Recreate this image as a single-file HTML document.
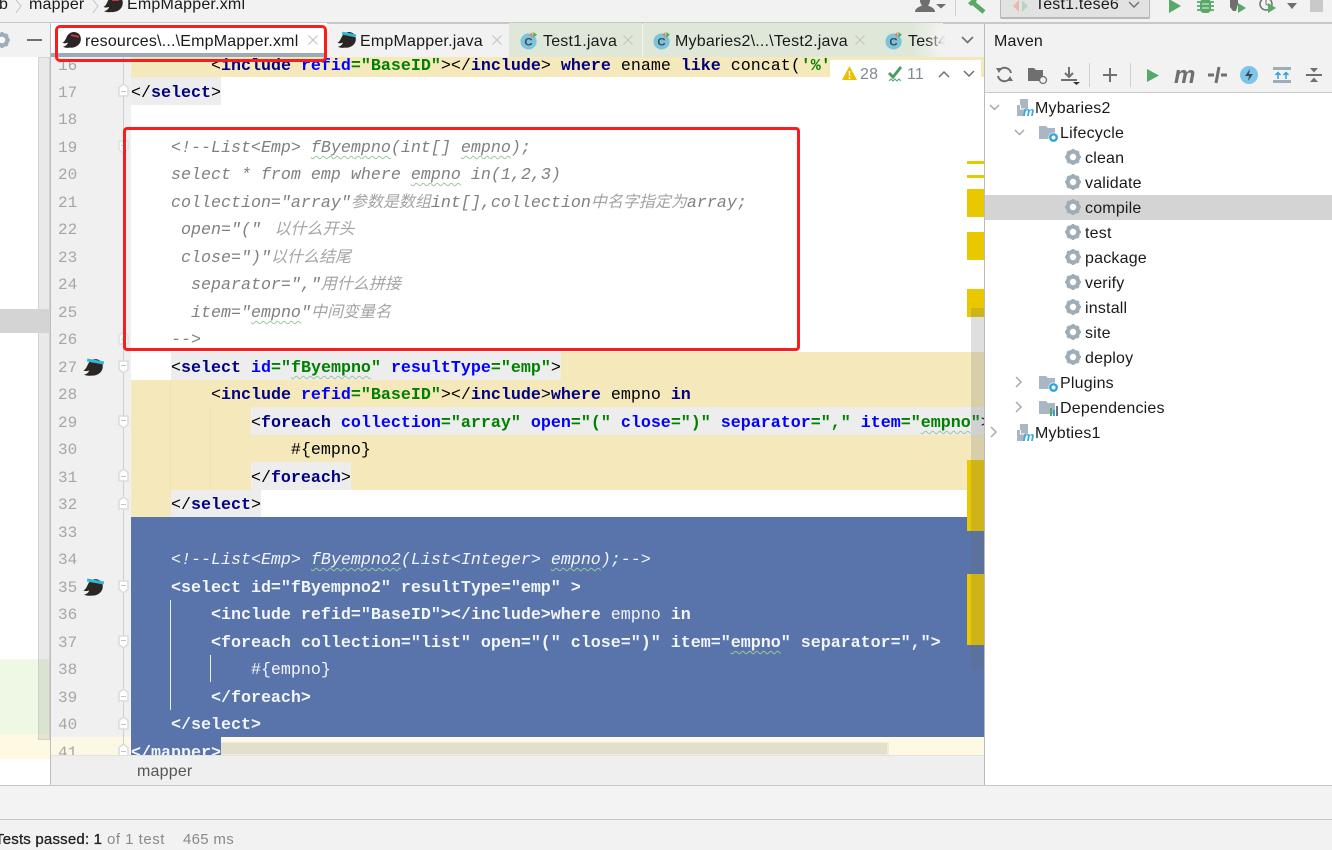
<!DOCTYPE html>
<html><head><meta charset="utf-8"><style>
html,body{margin:0;padding:0}
body{width:1332px;height:837px;overflow:hidden;background:#f2f2f2;position:relative;font-family:"Liberation Sans","Noto Sans CJK SC",sans-serif;font-size:15px;color:#1a1a1a}
.a{position:absolute}
.t{position:absolute;white-space:pre;line-height:20px;font-size:16px;letter-spacing:.2px}
.l{position:absolute;left:131px;height:27.5px;line-height:27.5px;white-space:pre;font-family:"Liberation Mono","Noto Sans CJK SC",monospace;font-size:16.67px;color:#000}
.n{position:absolute;left:58px;height:27.5px;line-height:27.5px;font-family:"Liberation Mono",monospace;font-size:16px;letter-spacing:0;color:#a6a6a6}
.g{font-weight:bold;color:#008000}.b{font-weight:bold;color:#0000ff}.v{font-weight:bold;color:#000080}
.c{font-style:italic;color:#808080}
.c i{font-family:"Noto Sans CJK SC",sans-serif;font-size:16px;color:#a4a4a4;line-height:0}
.w{text-decoration:underline wavy #9cc79c 1px;text-underline-offset:3px}
.s,.s b,.s span{color:#f2f5fa}
.s{font-weight:bold}
.s .r{font-weight:normal}
.tag{position:absolute;background:#ededed}
.m{position:absolute;left:967px;width:17px;background:#eac800}
.tb{position:absolute;top:23px;height:34px}
svg{position:absolute;overflow:visible}
.f{left:118px;width:11px;height:14px}
.x{top:35px;width:10px;height:10px}
</style></head><body>
<svg width="0" height="0" style="left:0;top:0"><defs>
<symbol id="mole" viewBox="0 0 22 20"><path d="M1 18C4 17.500 6 15.500 6.500 13.500 4 14.500 2 14.500 .5 13.500 3 12.500 4 9.500 5 7.500 7 3 11 1 15 2c4.500 1 6.500 5 5.500 9.500C19.500 16.500 14 19.500 9 19c-3 .3-5.500.3-8-1z" fill="#2b2624"/></symbol>
<symbol id="cls" viewBox="0 0 20 20"><circle cx="9" cy="11" r="8.500" fill="#7cc4dc"/><text x="9" y="15.500" font-family="Liberation Sans" font-size="12" font-weight="bold" fill="#3b4a52" text-anchor="middle">C</text><path d="M13 1v6l-3-3z" fill="#e8825c"/><path d="M14 1v6l4-3z" fill="#59a869"/></symbol>
<symbol id="gear" viewBox="0 0 16 16"><circle cx="8" cy="8" r="5.500" fill="none" stroke="#9fadb8" stroke-width="3.400"/><path d="M8 0v16M0 8h16M2.300 2.300l11.400 11.400M13.700 2.300L2.300 13.700" stroke="#9fadb8" stroke-width="2.600"/><circle cx="8" cy="8" r="3.200" fill="#fff"/></symbol>
<symbol id="fo" viewBox="0 0 11 14"><path d="M1 1h9v8.500l-4.500 3.500L1 9.500z" fill="#fff" stroke="#dcdcdc" stroke-width="1.600"/><path d="M3 5.500h5" stroke="#c4c4c4"/></symbol>
<symbol id="fc" viewBox="0 0 11 14"><path d="M1 13h9V4.500L5.500 1 1 4.500z" fill="#fff" stroke="#dcdcdc" stroke-width="1.600"/><path d="M3 8.500h5" stroke="#c4c4c4"/></symbol>
<symbol id="pom" viewBox="0 0 18 18"><path d="M1 6h3V0h8v10H9v7H1z" fill="#a9b7c4"/><path d="M4.500 6v4H9" fill="none" stroke="#fff"/><text x="12.500" y="17" font-family="Liberation Sans" font-size="13" font-weight="bold" font-style="italic" fill="#3aa9dd" text-anchor="middle">m</text></symbol>
<symbol id="fld" viewBox="0 0 20 18"><path d="M0 1h7l2 2h7v11H0z" fill="#a9b7c4"/><circle cx="14.500" cy="12.500" r="5" fill="#fff"/><circle cx="14.500" cy="12.500" r="3.200" fill="none" stroke="#2ba3dc" stroke-width="2.400"/></symbol>
<symbol id="cl" viewBox="0 0 10 10"><path d="M.5.500l9 9M9.500.500l-9 9" stroke="#c4c4c4" stroke-width="1.100"/></symbol>
</defs></svg>

<!-- top bar -->
<div class="a" style="left:0;top:22px;width:1332px;height:1px;background:#c8c8c8"></div>
<div class="t" style="left:-1px;top:-5px">b</div>
<svg style="left:15px;top:0" width="8" height="14"><path d="M1 0l5 6-5 7" fill="none" stroke="#c4c4c4"/></svg>
<div class="t" style="left:29px;top:-5px">mapper</div>
<svg style="left:92px;top:0" width="8" height="14"><path d="M1 0l5 6-5 7" fill="none" stroke="#c4c4c4"/></svg>
<svg style="left:103px;top:-6px" width="21" height="19"><use href="#mole"/></svg>
<div class="a" style="left:112px;top:-1px;width:7px;height:2px;background:#c7373c"></div>
<div class="t" style="left:127px;top:-5px">EmpMapper.xml</div>

<svg style="left:915px;top:-3px" width="32" height="16"><path d="M0 15c0-4 4-5 7-6.500C5.500 7 5 5 5 3.500 5 0 7.500-2 10-2s5 2 5 5.500c0 1.500-.5 3.500-2 5 3 1.500 7 2.500 7 6.500z" fill="#6f6f6f"/><path d="M21 7h10l-5 4.500z" fill="#6f6f6f"/></svg>
<div class="a" style="left:955px;top:0;width:1px;height:16px;background:#d0d0d0"></div>
<svg style="left:967px;top:-1px" width="20" height="15"><path d="M5 3l12 10" stroke="#59a869" stroke-width="4.500"/><path d="M1 4l6-5 3 3-6 5z" fill="#59a869"/></svg>
<div class="a" style="left:1000px;top:-3px;width:148px;height:20px;background:#e2e2e2;border:1px solid #b8b8b8;border-width:0 1px 2px 1px;border-radius:2px"></div>
<svg style="left:1013px;top:-1px" width="16" height="14"><path d="M6 1v12L0 7z" fill="#eab8a4"/><path d="M9 1v12l6-6z" fill="#b5d6bc"/></svg>
<div class="t" style="left:1035px;top:-5px">Test1.tese6</div>
<svg style="left:1128px;top:1px" width="12" height="8"><path d="M1 1l5 5 5-5" fill="none" stroke="#6e6e6e" stroke-width="1.400"/></svg>
<svg style="left:1168px;top:-2px" width="14" height="16"><path d="M1 1l12 7-12 7z" fill="#59a869"/></svg>
<svg style="left:1197px;top:-1px" width="17" height="15"><rect x="3" y="0" width="11" height="14" rx="4" fill="#59a869"/><path d="M0 3h17M0 7h17M0 11h17" stroke="#59a869" stroke-width="1.800"/><path d="M5 5h7M5 9h7" stroke="#c8e3cd" stroke-width="1.300"/></svg>
<svg style="left:1229px;top:-2px" width="20" height="17"><path d="M1 0h8v6l-2 7H4L1 9z" fill="#6f6f6f"/><path d="M9 5l8 5-8 5z" fill="#59a869"/></svg>
<svg style="left:1259px;top:-2px" width="20" height="17"><circle cx="7" cy="6" r="6" fill="none" stroke="#6f6f6f" stroke-width="1.500"/><path d="M7 2v4l3 2" fill="none" stroke="#6f6f6f"/><path d="M9 5l8 5-8 5z" fill="#59a869"/></svg>
<svg style="left:1287px;top:3px" width="12" height="7"><path d="M0 0h10L5 6z" fill="#6f6f6f"/></svg>
<div class="a" style="left:1310px;top:-2px;width:13px;height:14px;background:#c9c9c9"></div>

<!-- left panel -->
<div class="a" style="left:0;top:23px;width:50px;height:762px;background:#fff"></div>
<div class="a" style="left:0;top:23px;width:50px;height:34px;background:#f2f2f2"></div>
<svg style="left:-6px;top:32px" width="16" height="16"><use href="#gear"/></svg>
<div class="a" style="left:27px;top:39px;width:15px;height:2px;background:#6f6f6f"></div>
<div class="a" style="left:0;top:659px;width:50px;height:75px;background:#eef8e4"></div>
<div class="a" style="left:0;top:734px;width:50px;height:25px;background:#fef9e3"></div>
<div class="a" style="left:38px;top:57px;width:10px;height:681px;background:rgba(120,120,120,.16);border:1px solid rgba(190,190,190,.5)"></div>
<div class="a" style="left:0;top:309px;width:50px;height:24px;background:#d4d4d4"></div>
<div class="a" style="left:50px;top:23px;width:1px;height:762px;background:#bcbcbc"></div>

<!-- tabs -->
<div class="a" style="left:51px;top:23px;width:933px;height:34px;background:#f2f2f2"></div>
<div class="a" style="left:51px;top:23px;width:933px;height:1px;background:#c8c8c8"></div>
<div class="tb" style="left:51px;width:276px;background:#fff"></div>
<div class="a" style="left:51px;top:53px;width:276px;height:4px;background:#a0a9b8"></div>
<svg style="left:62px;top:30px" width="20" height="19"><use href="#mole"/></svg>
<div class="a" style="left:71px;top:35px;width:8px;height:2px;background:#c7373c;transform:rotate(12deg)"></div>
<div class="t" style="left:85px;top:32px">resources\...\EmpMapper.xml</div>
<svg class="x" style="left:308px"><use href="#cl"/></svg>
<svg style="left:337px;top:30px" width="20" height="19"><use href="#mole"/></svg>
<div class="a" style="left:342px;top:33px;width:14px;height:3px;background:#2fb7d8;transform:rotate(12deg)"></div>
<div class="t" style="left:360px;top:32px">EmpMapper.java</div>
<svg class="x" style="left:492px"><use href="#cl"/></svg>
<div class="tb" style="left:509px;width:133px;background:#dfe8d8"></div>
<div class="tb" style="left:643px;width:300px;background:linear-gradient(90deg,#dfe8d8 0,#dfe8d8 270px,#f2f2f2 300px)"></div>
<svg style="left:520px;top:31px" width="19" height="19"><use href="#cls"/></svg>
<div class="t" style="left:543px;top:32px">Test1.java</div>
<svg class="x" style="left:623px"><use href="#cl"/></svg>
<svg style="left:653px;top:31px" width="19" height="19"><use href="#cls"/></svg>
<div class="t" style="left:675px;top:32px">Mybaries2\...\Test2.java</div>
<svg class="x" style="left:855px"><use href="#cl"/></svg>
<svg style="left:885px;top:31px" width="19" height="19"><use href="#cls"/></svg>
<div class="t" style="left:908px;top:32px;width:38px;overflow:hidden">Test4</div>
<div class="a" style="left:926px;top:30px;width:20px;height:22px;background:linear-gradient(90deg,rgba(242,242,242,0),#f2f2f2 95%)"></div>
<svg style="left:961px;top:36px" width="13" height="9"><path d="M1 1l5.500 5.500L12 1" fill="none" stroke="#6e6e6e" stroke-width="1.600"/></svg>

<!-- editor -->
<div class="a" style="left:51px;top:57px;width:933px;height:698px;background:#fff;overflow:hidden"></div>
<div class="a" style="left:51px;top:57px;width:80px;height:698px;background:#f0f0f0"></div>
<div class="a" style="left:123px;top:57px;width:1px;height:698px;background:#cfcfcf"></div>

<div class="a" style="left:131px;top:57px;width:853px;height:20px;background:#f5e9bb"></div>
<div class="a" style="left:171px;top:352px;width:813px;height:28px;background:#f5e9bb"></div>
<div class="a" style="left:131px;top:380px;width:853px;height:110px;background:#f5e9bb"></div>
<div class="a" style="left:131px;top:490px;width:40px;height:27px;background:#f5e9bb"></div>
<div class="tag" style="left:131px;top:77px;width:90px;height:28px"></div>
<div class="tag" style="left:171px;top:352px;width:390px;height:28px"></div>
<div class="tag" style="left:251px;top:407px;width:733px;height:28px"></div>
<div class="tag" style="left:251px;top:462px;width:100px;height:28px"></div>
<div class="tag" style="left:171px;top:490px;width:90px;height:27px"></div>
<div class="a" style="left:131px;top:517px;width:853px;height:220px;background:#5874aa"></div>
<div class="a" style="left:51px;top:737px;width:933px;height:18px;background:#fef9e3"></div>
<div class="a" style="left:51px;top:737px;width:72px;height:18px;background:#f0f0f0"></div>
<div class="a" style="left:51px;top:737px;width:80px;height:18px;background:#fdf8e3"></div>
<div class="a" style="left:131px;top:737px;width:90px;height:18px;background:#5874aa"></div>
<div class="a" style="left:123px;top:737px;width:1px;height:18px;background:#cfcfcf"></div>
<div class="a" style="left:170px;top:600px;width:1px;height:110px;background:#e8edf5"></div>
<div class="a" style="left:210px;top:655px;width:1px;height:27px;background:#e8edf5"></div>
<div class="a" style="left:170px;top:380px;width:1px;height:110px;background:#eee3b6"></div>
<div class="a" style="left:210px;top:407px;width:1px;height:83px;background:#eee3b6"></div>

<div class="a" style="left:51px;top:57px;width:933px;height:698px;overflow:hidden">
<div style="position:absolute;left:-51px;top:-54px;width:1000px;height:800px">
<div class="n" style="top:50px">16</div><div class="n" style="top:77px">17</div><div class="n" style="top:104px">18</div><div class="n" style="top:132px">19</div><div class="n" style="top:159px">20</div><div class="n" style="top:187px">21</div><div class="n" style="top:214px">22</div><div class="n" style="top:242px">23</div><div class="n" style="top:269px">24</div><div class="n" style="top:297px">25</div><div class="n" style="top:324px">26</div><div class="n" style="top:352px">27</div><div class="n" style="top:379px">28</div><div class="n" style="top:407px">29</div><div class="n" style="top:434px">30</div><div class="n" style="top:462px">31</div><div class="n" style="top:489px">32</div><div class="n" style="top:517px">33</div><div class="n" style="top:544px">34</div><div class="n" style="top:572px">35</div><div class="n" style="top:599px">36</div><div class="n" style="top:627px">37</div><div class="n" style="top:654px">38</div><div class="n" style="top:682px">39</div><div class="n" style="top:709px">40</div><div class="n" style="top:737px">41</div>

<div class="l" style="top:50px">        &lt;<span class="v">include</span> <span class="b">refid</span><span class="g">="BaseID"</span>&gt;&lt;/<span class="v">include</span>&gt; <span class="v">where</span> ename <span class="v">like</span> concat(<span class="g">'%'</span></div>
<div class="l" style="top:77px">&lt;/<span class="v">select</span>&gt;</div>
<div class="l c" style="top:132px">    &lt;!--List&lt;Emp&gt; <span class="w">fByempno</span>(int[] <span class="w">empno</span>);</div>
<div class="l c" style="top:159px">    select * from emp where <span class="w">empno</span> in(1,2,3)</div>
<div class="l c" style="top:187px">    collection="array"<i>参数是数组</i>int[],collection<i>中名字指定为</i>array;</div>
<div class="l c" style="top:214px">     open="(" <i> 以什么开头</i></div>
<div class="l c" style="top:242px">     close=")"<i>以什么结尾</i></div>
<div class="l c" style="top:269px">      separator=","<i>用什么拼接</i></div>
<div class="l c" style="top:297px">      item="<span class="w">empno</span>"<i>中间变量名</i></div>
<div class="l c" style="top:324px">    --&gt;</div>
<div class="l" style="top:352px">    &lt;<span class="v">select</span> <span class="b">id</span><span class="g">="<span class="w">fByempno</span>"</span> <span class="b">resultType</span><span class="g">="emp"</span>&gt;</div>
<div class="l" style="top:379px">        &lt;<span class="v">include</span> <span class="b">refid</span><span class="g">="BaseID"</span>&gt;&lt;/<span class="v">include</span>&gt;<span class="v">where</span> empno <span class="v">in</span></div>
<div class="l" style="top:407px">            &lt;<span class="v">foreach</span> <span class="b">collection</span><span class="g">="array"</span> <span class="b">open</span><span class="g">="("</span> <span class="b">close</span><span class="g">=")"</span> <span class="b">separator</span><span class="g">=","</span> <span class="b">item</span><span class="g">="<span class="w">empno</span>"</span>&gt;</div>
<div class="l" style="top:434px">                #{empno}</div>
<div class="l" style="top:462px">            &lt;/<span class="v">foreach</span>&gt;</div>
<div class="l" style="top:489px">    &lt;/<span class="v">select</span>&gt;</div>
<div class="l s" style="top:544px"><span class="r" style="font-style:italic">    &lt;!--List&lt;Emp&gt; <span class="w r">fByempno2</span>(List&lt;Integer&gt; <span class="w r">empno</span>);--&gt;</span></div>
<div class="l s" style="top:572px">    &lt;select id="fByempno2" resultType="emp" &gt;</div>
<div class="l s" style="top:599px">        &lt;include refid="BaseID"&gt;&lt;/include&gt;where <span class="r">empno</span> in</div>
<div class="l s" style="top:627px">        &lt;foreach collection="list" open="(" close=")" item="<span class="w">empno</span>" separator=","&gt;</div>
<div class="l s" style="top:654px"><span class="r">            #{empno}</span></div>
<div class="l s" style="top:682px">        &lt;/foreach&gt;</div>
<div class="l s" style="top:709px">    &lt;/select&gt;</div>
<div class="l s" style="top:737px">&lt;/mapper&gt;</div>
</div></div>

<!-- fold markers -->
<svg class="f" style="top:83px"><use href="#fc"/></svg>
<svg class="f" style="top:140px;opacity:.7"><use href="#fo"/></svg>
<svg class="f" style="top:331px;opacity:.7"><use href="#fc"/></svg>
<svg class="f" style="top:360px"><use href="#fo"/></svg>
<svg class="f" style="top:415px"><use href="#fo"/></svg>
<svg class="f" style="top:468px"><use href="#fc"/></svg>
<svg class="f" style="top:496px"><use href="#fc"/></svg>
<svg class="f" style="top:580px"><use href="#fo"/></svg>
<svg class="f" style="top:635px"><use href="#fo"/></svg>
<svg class="f" style="top:688px"><use href="#fc"/></svg>
<svg class="f" style="top:716px"><use href="#fc"/></svg>
<svg class="f" style="top:743px"><use href="#fc"/></svg>
<!-- gutter mole icons -->
<svg style="left:83px;top:357px" width="21" height="20"><use href="#mole"/></svg>
<div class="a" style="left:87px;top:360px;width:17px;height:3px;background:#2fb7d8;transform:rotate(10deg)"></div>
<svg style="left:83px;top:577px" width="21" height="20"><use href="#mole"/></svg>
<div class="a" style="left:87px;top:580px;width:17px;height:3px;background:#2fb7d8;transform:rotate(10deg)"></div>

<!-- inspection overlay -->
<div class="a" style="left:830px;top:60px;width:151px;height:25px;background:#fff"></div>
<svg style="left:842px;top:66px" width="16" height="15"><path d="M7.500 0L15 14H0z" fill="#eac100"/><path d="M7.500 5v5M7.500 11v2" stroke="#fff" stroke-width="1.500"/></svg>
<div class="t" style="left:860px;top:65px;color:#7f8b91">28</div>
<svg style="left:888px;top:66px" width="15" height="17"><path d="M1 7l4 4 8-10" fill="none" stroke="#4f9e5f" stroke-width="3"/><path d="M1 15l2-2 2 2 2-2 2 2 2-2 2 2" fill="none" stroke="#59a869"/></svg>
<div class="t" style="left:907px;top:65px;color:#7f8b91">11</div>
<svg style="left:938px;top:70px" width="12" height="8"><path d="M1 7l5-5 5 5" fill="none" stroke="#6e6e6e" stroke-width="1.500"/></svg>
<svg style="left:963px;top:70px" width="12" height="8"><path d="M1 1l5 5 5-5" fill="none" stroke="#6e6e6e" stroke-width="1.500"/></svg>

<!-- error stripe -->
<div class="m" style="top:161px;height:3px"></div>
<div class="m" style="top:175px;height:3px"></div>
<div class="m" style="top:189px;height:28px"></div>
<div class="m" style="top:232px;height:28px"></div>
<div class="m" style="top:289px;height:28px"></div>
<div class="m" style="top:460px;height:71px"></div>
<div class="m" style="top:574px;height:71px"></div>
<div class="a" style="left:971px;top:308px;width:13px;height:361px;background:rgba(110,110,110,.22)"></div>

<!-- h scrollbar -->
<div class="a" style="left:221px;top:742px;width:666px;height:11px;background:#e2dfcd;border:1px solid #f0ecd8;border-width:1px 2px 2px 0"></div>

<!-- breadcrumb -->
<div class="a" style="left:51px;top:755px;width:933px;height:30px;background:#efefef;border-top:1px solid #e2e2e2;box-sizing:border-box"></div>
<div class="t" style="left:137px;top:762px;color:#555">mapper</div>

<!-- bottom -->
<div class="a" style="left:0;top:785px;width:1332px;height:1px;background:#c8c8c8"></div>
<div class="a" style="left:0;top:786px;width:1332px;height:33px;background:#f3f3f3"></div>
<div class="a" style="left:0;top:819px;width:1332px;height:1px;background:#c8c8c8"></div>
<div class="a" style="left:0;top:820px;width:1332px;height:17px;background:#f2f2f2"></div>
<div class="t" style="left:-5px;top:830px;font-size:15px;letter-spacing:.2px;color:#222;-webkit-text-stroke:.3px #222">Tests passed: 1</div>
<div class="t" style="left:107px;top:830px;font-size:15px;letter-spacing:.5px;color:#8a8a8a">of 1 test</div>
<div class="t" style="left:183px;top:830px;font-size:15px;letter-spacing:.3px;color:#8a8a8a">465 ms</div>

<!-- maven -->
<div class="a" style="left:984px;top:23px;width:1px;height:762px;background:#bcbcbc"></div>
<div class="a" style="left:985px;top:23px;width:347px;height:1px;background:#c8c8c8"></div>
<div class="a" style="left:985px;top:24px;width:347px;height:68px;background:#f2f2f2"></div>
<div class="a" style="left:985px;top:92px;width:347px;height:693px;background:#fff;border-top:1px solid #c8c8c8;box-sizing:border-box"></div>
<div class="t" style="left:994px;top:32px">Maven</div>
<svg style="left:996px;top:66px" width="17" height="17"><path d="M15 7A6.500 6.500 0 0 0 3 5M2 10a6.500 6.500 0 0 0 12 2" fill="none" stroke="#6f6f6f" stroke-width="2"/><path d="M0 2l6 0-3 5zM17 15l-6 0 3-5z" fill="#6f6f6f"/></svg>
<svg style="left:1028px;top:67px" width="20" height="18"><path d="M0 1h6l2 2h7v11H0z" fill="#6f6f6f"/><circle cx="15" cy="13" r="3.500" fill="#f2f2f2" stroke="#6f6f6f" stroke-width="1.300"/></svg>
<svg style="left:1061px;top:67px" width="19" height="18"><path d="M8 0v9M4 6l4 4 4-4" fill="none" stroke="#6f6f6f" stroke-width="2"/><path d="M0 13h16" stroke="#6f6f6f" stroke-width="2"/><path d="M12 15h7l-3.500 3z" fill="#333"/></svg>
<div class="a" style="left:1089px;top:63px;width:1px;height:24px;background:#cfcfcf"></div>
<svg style="left:1103px;top:68px" width="14" height="14"><path d="M7 0v14M0 7h14" stroke="#6f6f6f" stroke-width="2"/></svg>
<div class="a" style="left:1130px;top:63px;width:1px;height:24px;background:#cfcfcf"></div>
<svg style="left:1146px;top:68px" width="14" height="15"><path d="M1 1l12 6.500L1 14z" fill="#59a869"/></svg>
<div class="a" style="left:1174px;top:62px;font:italic bold 24px 'Liberation Sans';color:#6f6f6f;line-height:28px">m</div>
<svg style="left:1208px;top:66px" width="19" height="18"><path d="M0 9h6M13 9h6" stroke="#6f6f6f" stroke-width="3"/><path d="M8 17l3-16" stroke="#6f6f6f" stroke-width="3"/></svg>
<svg style="left:1240px;top:66px" width="18" height="18"><circle cx="9" cy="9" r="9" fill="#7dc6e8"/><path d="M10 3L5 10h4l-1 5 5-7H9z" fill="#3b4a52"/></svg>
<svg style="left:1273px;top:66px" width="18" height="18"><path d="M0 1h18v3H0zM0 14h18v3H0z" fill="#9fadb8"/><path d="M5 13V7M2.500 9L5 6.500 7.500 9M13 13V7M10.500 9L13 6.500 15.500 9" fill="none" stroke="#2ba3dc" stroke-width="1.500"/></svg>
<svg style="left:1306px;top:67px" width="16" height="16"><path d="M0 8h16" stroke="#6f6f6f" stroke-width="2"/><path d="M4 1h8L8 5.500zM4 15h8l-4-4.500z" fill="#6f6f6f"/></svg>

<div class="a" style="left:985px;top:195px;width:347px;height:25px;background:#d4d4d4"></div>
<svg style="left:989px;top:104px" width="11" height="7"><path d="M1 1l4.500 4.500L10 1" fill="none" stroke="#a8a8a8" stroke-width="1.500"/></svg>
<svg style="left:1014px;top:129px" width="11" height="7"><path d="M1 1l4.500 4.500L10 1" fill="none" stroke="#a8a8a8" stroke-width="1.500"/></svg>
<svg style="left:1016px;top:99px" width="18" height="18"><use href="#pom"/></svg>
<svg style="left:1039px;top:125px" width="20" height="18"><use href="#fld"/></svg>
<div class="t" style="left:1035px;top:99px">Mybaries2</div>
<div class="t" style="left:1060px;top:124px">Lifecycle</div>
<svg style="left:1065px;top:149px" width="16" height="16"><use href="#gear"/></svg><div class="t" style="left:1085px;top:149px">clean</div>
<svg style="left:1065px;top:174px" width="16" height="16"><use href="#gear"/></svg><div class="t" style="left:1085px;top:174px">validate</div>
<svg style="left:1065px;top:199px" width="16" height="16"><path d="M0 0" /><use href="#gear"/></svg><div class="t" style="left:1085px;top:199px">compile</div>
<svg style="left:1065px;top:224px" width="16" height="16"><use href="#gear"/></svg><div class="t" style="left:1085px;top:224px">test</div>
<svg style="left:1065px;top:249px" width="16" height="16"><use href="#gear"/></svg><div class="t" style="left:1085px;top:249px">package</div>
<svg style="left:1065px;top:274px" width="16" height="16"><use href="#gear"/></svg><div class="t" style="left:1085px;top:274px">verify</div>
<svg style="left:1065px;top:299px" width="16" height="16"><use href="#gear"/></svg><div class="t" style="left:1085px;top:299px">install</div>
<svg style="left:1065px;top:324px" width="16" height="16"><use href="#gear"/></svg><div class="t" style="left:1085px;top:324px">site</div>
<svg style="left:1065px;top:349px" width="16" height="16"><use href="#gear"/></svg><div class="t" style="left:1085px;top:349px">deploy</div>
<svg style="left:1015px;top:376px" width="7" height="12"><path d="M1 1l5 5-5 5" fill="none" stroke="#a8a8a8" stroke-width="1.500"/></svg>
<svg style="left:1039px;top:375px" width="20" height="18"><use href="#fld"/></svg>
<div class="t" style="left:1060px;top:374px">Plugins</div>
<svg style="left:1015px;top:401px" width="7" height="12"><path d="M1 1l5 5-5 5" fill="none" stroke="#a8a8a8" stroke-width="1.500"/></svg>
<svg style="left:1039px;top:400px" width="20" height="18"><path d="M0 1h7l2 2h7v11H0z" fill="#a9b7c4"/><path d="M11 8h2v8h-2z" fill="#59a869"/><path d="M14 10h2v6h-2z" fill="#2ba3dc"/><path d="M17 6h2v10h-2z" fill="#6f6f6f"/></svg>
<div class="t" style="left:1060px;top:399px">Dependencies</div>
<svg style="left:990px;top:426px" width="7" height="12"><path d="M1 1l5 5-5 5" fill="none" stroke="#a8a8a8" stroke-width="1.500"/></svg>
<svg style="left:1016px;top:424px" width="18" height="18"><use href="#pom"/></svg>
<div class="t" style="left:1035px;top:424px">Mybties1</div>

<!-- red annotations -->
<div class="a" style="left:55px;top:25px;width:266px;height:31px;border:3.500px solid #fb1d1d;border-radius:5px"></div>
<div class="a" style="left:123px;top:127px;width:671px;height:218px;border:3.500px solid #fb1d1d;border-radius:4px"></div>
</body></html>
